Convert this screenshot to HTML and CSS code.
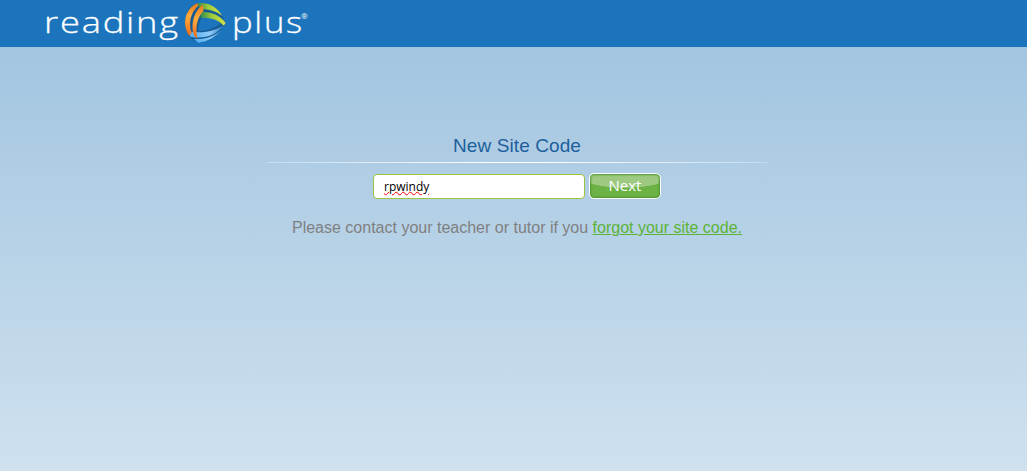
FILE: index.html
```
<!DOCTYPE html>
<html lang="en">

<head>
    <meta charset="utf-8">
    <title>Reading Plus</title>
    <link rel="stylesheet" href="styles.css">
</head>

<body>
    <header class="top-bar">
        <svg class="logo" width="270" height="47" viewBox="0 0 270 47">
            <defs>
                <linearGradient id="orange" x1="0" y1="0" x2="0" y2="1">
                    <stop offset="0" stop-color="#e8781e" />
                    <stop offset="0.4" stop-color="#fbac3c" />
                    <stop offset="1" stop-color="#ec6a1c" />
                </linearGradient>
                <linearGradient id="green" x1="0" y1="0" x2="1" y2="0">
                    <stop offset="0" stop-color="#2f8a4c" />
                    <stop offset="0.45" stop-color="#9ccb3b" />
                    <stop offset="1" stop-color="#d3e34a" />
                </linearGradient>
                <linearGradient id="blue" x1="0" y1="0" x2="1" y2="0">
                    <stop offset="0" stop-color="#46aaf0" />
                    <stop offset="0.6" stop-color="#8ecbf8" />
                    <stop offset="1" stop-color="#2678bd" />
                </linearGradient>
            </defs>
            <text class="logo-text" x="2" y="33" textLength="136" lengthAdjust="spacingAndGlyphs">reading</text>
            <!-- three-colour ball -->
            <g transform="translate(141 0) scale(0.3333)">
                <path fill="#155a94" d="M42 10C68 6 98 18 114 42L128 70C112 98 82 118 46 127C18 118 4 95 7 60C10 35 20 18 42 10Z" />
                <path fill="#1c75bc" d="M60 49C84 49 102 58 113 72C95 84 72 92 46 94C44 78 50 62 60 49Z" />
                <path fill="url(#green)" d="M42 10C70 5 102 18 117 47C100 34 78 27 52 27Z" />
                <path fill="url(#green)" d="M56 36C84 34 112 46 128 69L122 77C106 58 82 52 52 53Z" />
                <path fill="url(#blue)" d="M124 75C98 108 62 118 22 110L14 94C60 102 96 93 124 75Z" />
                <path fill="url(#blue)" d="M120 86C100 110 74 124 46 128L32 117C68 119 96 108 120 86Z" />
                <path fill="url(#orange)" d="M43 10C8 24 -6 72 19 108L26 98C16 70 22 38 46 17Z" />
                <path fill="url(#orange)" d="M60 14C36 28 20 72 34 108L44 116C36 84 42 52 62 32Z" />
            </g>
            <text class="logo-text" x="190" y="33" textLength="72" lengthAdjust="spacingAndGlyphs">plus</text>
            <text class="logo-mark" x="259" y="19">®</text>
        </svg>
    </header>

    <main class="content-container">
        <h1>New Site Code</h1>
        <div class="divider"></div>
        <form class="code-form">
            <div class="code-input" contenteditable="true"><span class="misspelled">rpwindy</span></div>
            <button type="button" class="next-button">Next</button>
        </form>
        <p class="help-message">Please contact your teacher or tutor if you <a href="#">forgot your site code.</a></p>
    </main>
</body>

</html>
```
FILE: styles.css
```
html {
    height: 100%;
}

body {
    margin: 0;
    min-height: 100%;
    font-family: "Liberation Sans", Arial, sans-serif;
    background: linear-gradient(#a2c5e0 47px, #cfe1ef 100%);
}

.top-bar {
    height: 47px;
    padding-left: 42px;
    background-color: #1c75bc;
}

.logo {
    display: block;
}

.logo-text {
    font-family: "Open Sans", sans-serif;
    font-size: 30px;
    font-weight: 300;
    letter-spacing: 1.5px;
    fill: #ffffff;
    stroke: #ffffff;
    stroke-width: 0.3px;
}

.logo-mark {
    font-family: "Open Sans", sans-serif;
    font-size: 8px;
    fill: #ffffff;
}

.content-container {
    width: 500px;
    margin: 0 auto;
    padding: 87px 0 0 7px;
    text-align: center;
}

h1 {
    margin: 0;
    font-size: 19px;
    line-height: 24px;
    font-weight: 400;
    letter-spacing: 0.1px;
    color: #1c5f9c;
}

/* line that fades out at both ends */
.divider {
    height: 1px;
    margin-top: 4px;
    background: linear-gradient(to right, rgba(255, 255, 255, 0.3), #ffffff 45%, #ffffff 55%, rgba(255, 255, 255, 0.3));
}

.code-form {
    display: flex;
    justify-content: center;
    gap: 4px;
    margin-top: 10px;
}

.code-input {
    box-sizing: border-box;
    width: 212px;
    height: 25px;
    margin-top: 1px;
    padding-left: 10px;
    border: 1px solid #9bc53d;
    border-radius: 4px;
    background-color: #ffffff;
    font-family: "Open Sans", sans-serif;
    font-size: 12px;
    line-height: 23px;
    text-align: left;
    color: #000000;
    outline: none;
}

.misspelled {
    text-decoration: underline wavy #ff0000 1px;
    text-underline-offset: 0;
}

.next-button {
    width: 72px;
    height: 26px;
    padding: 0 0 2px;
    border: 1px solid #ffffff;
    border-radius: 5px;
    background:
        radial-gradient(ellipse 48px 14px at 50% 0, #9dca80 96%, transparent 100%),
        #6db244;
    box-shadow: inset 0 0 2px 1px #4f9632;
    font-family: "Open Sans", sans-serif;
    font-size: 15px;
    line-height: 22px;
    color: #ffffff;
}

.help-message {
    margin: 19px 0 0;
    font-size: 16px;
    line-height: 20px;
    color: #808080;
}

.help-message a {
    color: #5cb336;
}
```
